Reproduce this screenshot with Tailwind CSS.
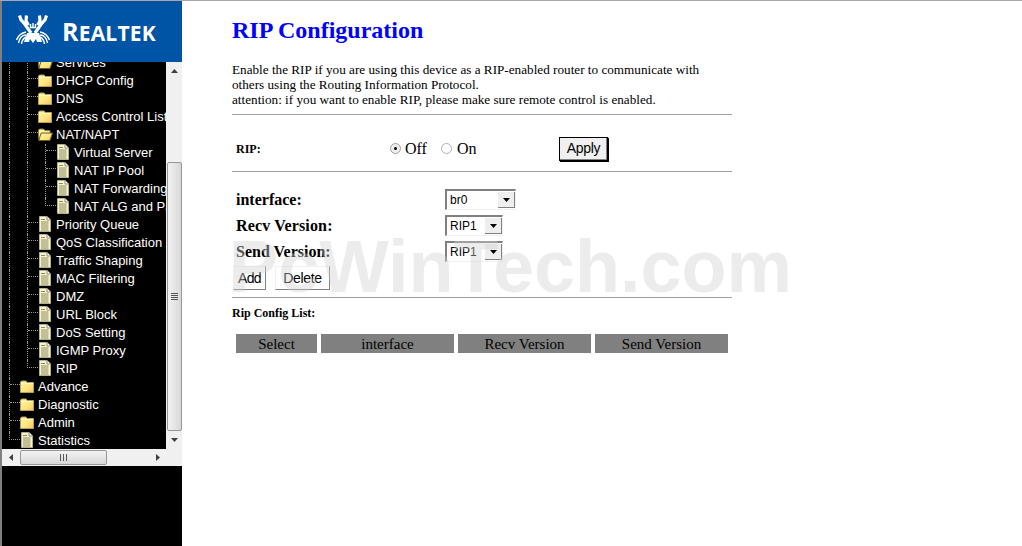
<!DOCTYPE html>
<html>
<head>
<meta charset="utf-8">
<script src="https://cdn.jsdelivr.net/npm/@tailwindcss/browser@4"></script>
<title>RIP Configuration</title>
</head>
<body class="bg-white">
<svg width="0" height="0" class="absolute">
  <defs>
    <linearGradient id="fg" x1="0" y1="0" x2="1" y2="1"><stop offset="0" stop-color="#fff4a8"/><stop offset="0.6" stop-color="#ffe47c"/><stop offset="1" stop-color="#f4bc70"/></linearGradient>
    <symbol id="folder" viewBox="0 0 14 13"><path d="M0.5 12.5V2.2L1.5 1H6L7.2 2.5H13.5V12.5Z" fill="url(#fg)" stroke="#b8a050"/><path d="M1 3.5H13" stroke="#fff8c8"/></symbol>
    <symbol id="open" viewBox="0 0 15 13"><path d="M0.5 11V2L1.5 1H5.5L7 2.5H12V5" fill="#fff2a0" stroke="#8a7a38"/><path d="M0.7 12.5L3.2 5H14.5L12 12.5Z" fill="url(#fg)" stroke="#6a5a20"/></symbol>
    <symbol id="doc" viewBox="0 0 12 16"><path d="M0.5 0.5H8L11.5 4V15.5H0.5Z" fill="#f8f4c8" stroke="#b0b090"/><path d="M8 0.5V4H11.5" fill="#fff" stroke="#888"/><path d="M2 3.5H6M2 6H9.5M2 8H9.5M2 10H9.5M2 12H9.5M2 14H9.5" stroke="#8a8a68"/></symbol>
  </defs>
</svg>
<div class="relative flex h-[546px] w-[1022px] overflow-hidden border-t border-[#a8a8a8] font-['Liberation_Serif',serif] text-black">
  <aside class="flex h-full w-[182px] shrink-0 flex-col border-l-2 border-[#808080] bg-black font-['Liberation_Sans',sans-serif]">
    <div class="flex h-[61px] shrink-0 items-center bg-[#0054a6] pl-[14px] text-white">
      <svg width="34" height="30" viewBox="0 0 34 30" fill="none" stroke="#fff" class="mt-[-3px] shrink-0">
        <path d="M3.5 0.5L5 5L8 8L15 18" stroke-width="3.2"/><path d="M10.5 0.5L10 6L12.5 10" stroke-width="3.2"/>
        <path d="M30.5 0.5L29 5L26 8L19 18" stroke-width="3.2"/><path d="M23.5 0.5L24 6L21.5 10" stroke-width="3.2"/>
        <path d="M14.5 9V12.5H19.5V9M17 8V12" stroke-width="1.4"/>
        <path d="M11 18H23L26 27H21L20 24L17 28L14 24L13 27H8Z" fill="#fff" stroke="none"/>
        <path d="M10 17C5 18 2 21 0.5 25M10 20C6 20 3.5 23 2.5 28M10 22C8 23 6 25 5.5 29" stroke-width="1.4"/>
        <path d="M24 17C29 18 32 21 33.5 25M24 20C28 20 30.5 23 31.5 28M24 22C26 23 28 25 28.5 29" stroke-width="1.4"/>
      </svg>
      <span class="mt-[-1px] ml-[12px] font-['Open_Sans',sans-serif] text-[21px] leading-none font-bold tracking-[0.2px] whitespace-nowrap"><span class="text-[25px]">R</span>EALTEK</span>
    </div>
    <div class="flex h-[387px] shrink-0">
      <div class="w-[164px] overflow-hidden text-[13px] leading-[18px] text-white">
        <div class="mt-[-8px]">
          <div class="flex h-[18px] items-center whitespace-nowrap"><span class="ml-[7px] h-full w-[11px] shrink-0 border-l border-dotted border-[#999]"></span><span class="ml-[7px] h-full w-[11px] shrink-0 border-l border-dotted border-[#999]"></span><svg width="15" height="13" class="mt-[-2px] mr-[3px] shrink-0"><use href="#open"/></svg>Services</div>
          <div class="flex h-[18px] items-center whitespace-nowrap"><span class="ml-[7px] h-full w-[11px] shrink-0 border-l border-dotted border-[#999]"></span><span class="ml-[7px] h-full w-[11px] shrink-0 border-l border-dotted border-[#999]"><span class="block h-[7px] border-b border-dotted border-[#999]"></span></span><svg width="14" height="13" class="mt-[-2px] mr-[4px] shrink-0"><use href="#folder"/></svg>DHCP Config</div>
          <div class="flex h-[18px] items-center whitespace-nowrap"><span class="ml-[7px] h-full w-[11px] shrink-0 border-l border-dotted border-[#999]"></span><span class="ml-[7px] h-full w-[11px] shrink-0 border-l border-dotted border-[#999]"><span class="block h-[7px] border-b border-dotted border-[#999]"></span></span><svg width="14" height="13" class="mt-[-2px] mr-[4px] shrink-0"><use href="#folder"/></svg>DNS</div>
          <div class="flex h-[18px] items-center whitespace-nowrap"><span class="ml-[7px] h-full w-[11px] shrink-0 border-l border-dotted border-[#999]"></span><span class="ml-[7px] h-full w-[11px] shrink-0 border-l border-dotted border-[#999]"><span class="block h-[7px] border-b border-dotted border-[#999]"></span></span><svg width="14" height="13" class="mt-[-2px] mr-[4px] shrink-0"><use href="#folder"/></svg>Access Control List</div>
          <div class="flex h-[18px] items-center whitespace-nowrap"><span class="ml-[7px] h-full w-[11px] shrink-0 border-l border-dotted border-[#999]"></span><span class="ml-[7px] h-full w-[11px] shrink-0 border-l border-dotted border-[#999]"><span class="block h-[7px] border-b border-dotted border-[#999]"></span></span><svg width="15" height="13" class="mt-[-2px] mr-[3px] shrink-0"><use href="#open"/></svg>NAT/NAPT</div>
          <div class="flex h-[18px] items-center whitespace-nowrap"><span class="ml-[7px] h-full w-[11px] shrink-0 border-l border-dotted border-[#999]"></span><span class="ml-[7px] h-full w-[11px] shrink-0 border-l border-dotted border-[#999]"></span><span class="ml-[7px] h-full w-[11px] shrink-0 border-l border-dotted border-[#999]"><span class="block h-[7px] border-b border-dotted border-[#999]"></span></span><svg width="12" height="16" class="mt-[-2px] ml-[1px] mr-[5px] shrink-0"><use href="#doc"/></svg>Virtual Server</div>
          <div class="flex h-[18px] items-center whitespace-nowrap"><span class="ml-[7px] h-full w-[11px] shrink-0 border-l border-dotted border-[#999]"></span><span class="ml-[7px] h-full w-[11px] shrink-0 border-l border-dotted border-[#999]"></span><span class="ml-[7px] h-full w-[11px] shrink-0 border-l border-dotted border-[#999]"><span class="block h-[7px] border-b border-dotted border-[#999]"></span></span><svg width="12" height="16" class="mt-[-2px] ml-[1px] mr-[5px] shrink-0"><use href="#doc"/></svg>NAT IP Pool</div>
          <div class="flex h-[18px] items-center whitespace-nowrap"><span class="ml-[7px] h-full w-[11px] shrink-0 border-l border-dotted border-[#999]"></span><span class="ml-[7px] h-full w-[11px] shrink-0 border-l border-dotted border-[#999]"></span><span class="ml-[7px] h-full w-[11px] shrink-0 border-l border-dotted border-[#999]"><span class="block h-[7px] border-b border-dotted border-[#999]"></span></span><svg width="12" height="16" class="mt-[-2px] ml-[1px] mr-[5px] shrink-0"><use href="#doc"/></svg>NAT Forwarding</div>
          <div class="flex h-[18px] items-center whitespace-nowrap"><span class="ml-[7px] h-full w-[11px] shrink-0 border-l border-dotted border-[#999]"></span><span class="ml-[7px] h-full w-[11px] shrink-0 border-l border-dotted border-[#999]"></span><span class="ml-[7px] h-[8px] w-[11px] shrink-0 self-start border-b border-l border-dotted border-[#999]"></span><svg width="12" height="16" class="mt-[-2px] ml-[1px] mr-[5px] shrink-0"><use href="#doc"/></svg>NAT ALG and Pass-Through</div>
          <div class="flex h-[18px] items-center whitespace-nowrap"><span class="ml-[7px] h-full w-[11px] shrink-0 border-l border-dotted border-[#999]"></span><span class="ml-[7px] h-full w-[11px] shrink-0 border-l border-dotted border-[#999]"><span class="block h-[7px] border-b border-dotted border-[#999]"></span></span><svg width="12" height="16" class="mt-[-2px] ml-[1px] mr-[5px] shrink-0"><use href="#doc"/></svg>Priority Queue</div>
          <div class="flex h-[18px] items-center whitespace-nowrap"><span class="ml-[7px] h-full w-[11px] shrink-0 border-l border-dotted border-[#999]"></span><span class="ml-[7px] h-full w-[11px] shrink-0 border-l border-dotted border-[#999]"><span class="block h-[7px] border-b border-dotted border-[#999]"></span></span><svg width="12" height="16" class="mt-[-2px] ml-[1px] mr-[5px] shrink-0"><use href="#doc"/></svg>QoS Classification</div>
          <div class="flex h-[18px] items-center whitespace-nowrap"><span class="ml-[7px] h-full w-[11px] shrink-0 border-l border-dotted border-[#999]"></span><span class="ml-[7px] h-full w-[11px] shrink-0 border-l border-dotted border-[#999]"><span class="block h-[7px] border-b border-dotted border-[#999]"></span></span><svg width="12" height="16" class="mt-[-2px] ml-[1px] mr-[5px] shrink-0"><use href="#doc"/></svg>Traffic Shaping</div>
          <div class="flex h-[18px] items-center whitespace-nowrap"><span class="ml-[7px] h-full w-[11px] shrink-0 border-l border-dotted border-[#999]"></span><span class="ml-[7px] h-full w-[11px] shrink-0 border-l border-dotted border-[#999]"><span class="block h-[7px] border-b border-dotted border-[#999]"></span></span><svg width="12" height="16" class="mt-[-2px] ml-[1px] mr-[5px] shrink-0"><use href="#doc"/></svg>MAC Filtering</div>
          <div class="flex h-[18px] items-center whitespace-nowrap"><span class="ml-[7px] h-full w-[11px] shrink-0 border-l border-dotted border-[#999]"></span><span class="ml-[7px] h-full w-[11px] shrink-0 border-l border-dotted border-[#999]"><span class="block h-[7px] border-b border-dotted border-[#999]"></span></span><svg width="12" height="16" class="mt-[-2px] ml-[1px] mr-[5px] shrink-0"><use href="#doc"/></svg>DMZ</div>
          <div class="flex h-[18px] items-center whitespace-nowrap"><span class="ml-[7px] h-full w-[11px] shrink-0 border-l border-dotted border-[#999]"></span><span class="ml-[7px] h-full w-[11px] shrink-0 border-l border-dotted border-[#999]"><span class="block h-[7px] border-b border-dotted border-[#999]"></span></span><svg width="12" height="16" class="mt-[-2px] ml-[1px] mr-[5px] shrink-0"><use href="#doc"/></svg>URL Block</div>
          <div class="flex h-[18px] items-center whitespace-nowrap"><span class="ml-[7px] h-full w-[11px] shrink-0 border-l border-dotted border-[#999]"></span><span class="ml-[7px] h-full w-[11px] shrink-0 border-l border-dotted border-[#999]"><span class="block h-[7px] border-b border-dotted border-[#999]"></span></span><svg width="12" height="16" class="mt-[-2px] ml-[1px] mr-[5px] shrink-0"><use href="#doc"/></svg>DoS Setting</div>
          <div class="flex h-[18px] items-center whitespace-nowrap"><span class="ml-[7px] h-full w-[11px] shrink-0 border-l border-dotted border-[#999]"></span><span class="ml-[7px] h-full w-[11px] shrink-0 border-l border-dotted border-[#999]"><span class="block h-[7px] border-b border-dotted border-[#999]"></span></span><svg width="12" height="16" class="mt-[-2px] ml-[1px] mr-[5px] shrink-0"><use href="#doc"/></svg>IGMP Proxy</div>
          <div class="flex h-[18px] items-center whitespace-nowrap"><span class="ml-[7px] h-full w-[11px] shrink-0 border-l border-dotted border-[#999]"></span><span class="ml-[7px] h-[8px] w-[11px] shrink-0 self-start border-b border-l border-dotted border-[#999]"></span><svg width="12" height="16" class="mt-[-2px] ml-[1px] mr-[5px] shrink-0"><use href="#doc"/></svg>RIP</div>
          <div class="flex h-[18px] items-center whitespace-nowrap"><span class="ml-[7px] h-full w-[11px] shrink-0 border-l border-dotted border-[#999]"><span class="block h-[7px] border-b border-dotted border-[#999]"></span></span><svg width="14" height="13" class="mt-[-2px] mr-[4px] shrink-0"><use href="#folder"/></svg>Advance</div>
          <div class="flex h-[18px] items-center whitespace-nowrap"><span class="ml-[7px] h-full w-[11px] shrink-0 border-l border-dotted border-[#999]"><span class="block h-[7px] border-b border-dotted border-[#999]"></span></span><svg width="14" height="13" class="mt-[-2px] mr-[4px] shrink-0"><use href="#folder"/></svg>Diagnostic</div>
          <div class="flex h-[18px] items-center whitespace-nowrap"><span class="ml-[7px] h-full w-[11px] shrink-0 border-l border-dotted border-[#999]"><span class="block h-[7px] border-b border-dotted border-[#999]"></span></span><svg width="14" height="13" class="mt-[-2px] mr-[4px] shrink-0"><use href="#folder"/></svg>Admin</div>
          <div class="flex h-[18px] items-center whitespace-nowrap"><span class="ml-[7px] h-[8px] w-[11px] shrink-0 self-start border-b border-l border-dotted border-[#999]"></span><svg width="12" height="16" class="mt-[-2px] ml-[1px] mr-[5px] shrink-0"><use href="#doc"/></svg>Statistics</div>
        </div>
      </div>
      <div class="flex w-[16px] flex-col items-center bg-[#f0f0f0]">
        <div class="flex h-[17px] w-full items-center justify-center pt-[1px]"><svg width="7" height="4"><path d="M3.5 0L7 4H0Z" fill="#404040"/></svg></div>
        <div class="mt-[83px] flex h-[269px] w-[15px] items-center justify-center rounded-[2px] border border-[#979797] bg-linear-to-r from-[#f2f2f2] to-[#d8d8d8]">
          <div class="mt-[-1px] flex h-[7px] w-[7px] flex-col justify-between"><span class="h-px bg-[#555]"></span><span class="h-px bg-[#555]"></span><span class="h-px bg-[#555]"></span><span class="h-px bg-[#555]"></span></div>
        </div>
        <div class="flex w-full flex-1 items-center justify-center"><svg width="7" height="4"><path d="M3.5 4L7 0H0Z" fill="#404040"/></svg></div>
      </div>
    </div>
    <div class="flex h-[17px] w-full shrink-0 items-center bg-[#f0f0f0]">
      <div class="flex w-[18px] justify-center"><svg width="4" height="7"><path d="M0 3.5L4 0V7Z" fill="#404040"/></svg></div>
      <div class="flex h-[15px] w-[87px] items-center justify-center rounded-[2px] border border-[#979797] bg-linear-to-b from-[#f2f2f2] to-[#d8d8d8]">
        <div class="flex h-[7px] w-[7px] justify-between"><span class="w-px bg-[#555]"></span><span class="w-px bg-[#555]"></span><span class="w-px bg-[#555]"></span></div>
      </div>
      <div class="ml-[47px] flex w-[8px] justify-center"><svg width="4" height="7"><path d="M4 3.5L0 0V7Z" fill="#404040"/></svg></div>
    </div>
  </aside>
  <main class="relative w-[838px] pl-[50px]">
    <div class="w-[500px]">
      <h1 class="mt-[15px] h-[28px] text-[24px] leading-[28px] font-bold text-[#0000ff]">RIP Configuration</h1>
      <p class="mt-[18px] text-[13.2px] leading-[15px] whitespace-nowrap">Enable the RIP if you are using this device as a RIP-enabled router to communicate with<br>others using the Routing Information Protocol.<br>attention: if you want to enable RIP, please make sure remote control is enabled.</p>
      <div class="mt-[7px] h-px bg-[#a0a0a0]"></div>
      <div class="flex h-[56px] items-center pt-[11px] pl-[4px]">
        <span class="w-[154px] text-[12px] font-bold">RIP:</span>
        <span class="h-[11px] w-[11px] rounded-full border border-[#a0a0a0] bg-[#eee] p-[3px]"><span class="block h-[3px] w-[3px] rounded-full bg-black"></span></span>
        <span class="ml-[4px] w-[36px] text-[16px]">Off</span>
        <span class="h-[11px] w-[11px] rounded-full border border-[#b0b0b0] bg-white"></span>
        <span class="ml-[5px] w-[102px] text-[16px]">On</span>
        <span class="flex h-[24px] w-[49px] items-center justify-center border border-black bg-[#f0f0f0] font-['Liberation_Sans',sans-serif] text-[14px] tracking-[-0.3px] shadow-[inset_-1px_-1px_0_#808080,1px_1px_0_#000]">Apply</span>
      </div>
      <div class="h-px bg-[#a0a0a0]"></div>
      <div class="mt-[17px] flex h-[26px] items-start pl-[4px] text-[16px] font-bold">
        <span class="mt-[-1px] w-[209px]">interface:</span>
        <span class="flex h-[21px] w-[71px] items-center justify-between border border-t-2 border-l-2 border-[#808080] border-r-[#f0f0f0] border-b-[#f0f0f0] bg-white pl-[3px] font-['Liberation_Sans',sans-serif] text-[12px] font-normal">br0<span class="flex h-[16px] w-[17px] items-center justify-center border-r border-b border-[#808080] bg-[#eee]"><svg width="7" height="4"><path d="M0 0H7L3.5 4Z"/></svg></span></span>
      </div>
      <div class="flex h-[26px] items-start pl-[4px] text-[16px] font-bold">
        <span class="mt-[-1px] w-[209px] tracking-[0.15px]">Recv Version:</span>
        <span class="flex h-[21px] w-[58px] items-center justify-between border border-t-2 border-l-2 border-[#808080] border-r-[#f0f0f0] border-b-[#f0f0f0] bg-white pl-[3px] font-['Liberation_Sans',sans-serif] text-[12px] font-normal">RIP1<span class="flex h-[16px] w-[17px] items-center justify-center border-r border-b border-[#808080] bg-[#eee]"><svg width="7" height="4"><path d="M0 0H7L3.5 4Z"/></svg></span></span>
      </div>
      <div class="flex h-[26px] items-start pl-[4px] text-[16px] font-bold">
        <span class="mt-[-1px] w-[209px]">Send Version:</span>
        <span class="flex h-[21px] w-[58px] items-center justify-between border border-t-2 border-l-2 border-[#808080] border-r-[#f0f0f0] border-b-[#f0f0f0] pl-[3px] font-['Liberation_Sans',sans-serif] text-[12px] font-normal">RIP1<span class="flex h-[16px] w-[17px] items-center justify-center border-r border-b border-[#808080] bg-[#eee]"><svg width="7" height="4"><path d="M0 0H7L3.5 4Z"/></svg></span></span>
      </div>
      <div class="mt-[-1px] ml-[1px] flex gap-[9px] font-['Liberation_Sans',sans-serif] text-[14px]">
        <span class="flex h-[24px] w-[33px] items-center justify-center border border-[#f0f0f0] border-r-[#808080] border-b-[#808080] tracking-[-0.6px]">Add</span>
        <span class="flex h-[24px] w-[55px] items-center justify-center border border-[#f0f0f0] border-r-[#808080] border-b-[#808080] tracking-[-0.3px]">Delete</span>
      </div>
      <div class="mt-[7px] h-px bg-[#a0a0a0]"></div>
      <h2 class="mt-[8px] text-[12px] leading-[14px] font-bold">Rip Config List:</h2>
      <div class="mt-[14px] ml-[4px] flex gap-[4px] text-[15px] leading-[21px]">
        <span class="h-[19px] w-[81px] bg-[#808080] text-center">Select</span>
        <span class="h-[19px] w-[133px] bg-[#808080] text-center">interface</span>
        <span class="h-[19px] w-[133px] bg-[#808080] text-center">Recv Version</span>
        <span class="h-[19px] w-[133px] bg-[#808080] text-center">Send Version</span>
      </div>
    </div>
    <span class="pointer-events-none absolute top-[229px] left-[47px] font-['Liberation_Sans',sans-serif] text-[73.7px] leading-none font-bold whitespace-nowrap text-[#cfcfcf]/40">PcWinTech.com</span>
  </main>
</div>
</body>
</html>
